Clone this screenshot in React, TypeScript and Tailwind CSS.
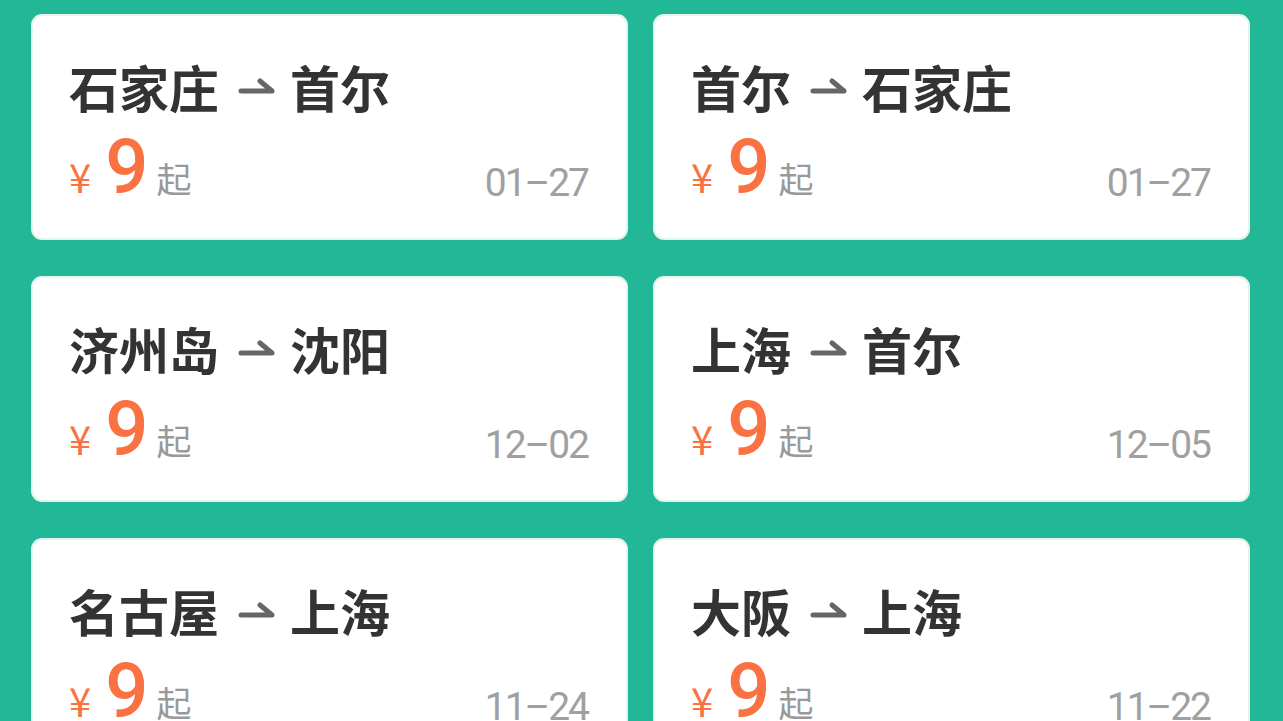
import React from 'react';

interface Route {
  from: string;
  to: string;
  price: number;
  date: string;
}

const routes: Route[] = [
  { from: '石家庄', to: '首尔', price: 9, date: '01-27' },
  { from: '首尔', to: '石家庄', price: 9, date: '01-27' },
  { from: '济州岛', to: '沈阳', price: 9, date: '12-02' },
  { from: '上海', to: '首尔', price: 9, date: '12-05' },
  { from: '名古屋', to: '上海', price: 9, date: '11-24' },
  { from: '大阪', to: '上海', price: 9, date: '11-22' },
];

function RouteArrow() {
  return (
    <svg width="38" height="18" viewBox="0 0 38 18" className="ml-[19px] mr-[14px] shrink-0">
      <path
        d="M3 14 H34 L22 4"
        fill="none"
        stroke="#666666"
        strokeWidth="5"
        strokeLinecap="round"
        strokeLinejoin="round"
      />
    </svg>
  );
}

function RouteCard({ route }: { route: Route }) {
  return (
    <div className="h-[226px] rounded-[11px] border-2 border-[#e3f4ef] bg-white pl-[36px] pr-[36px] pt-[45px]">
      <div
        className="flex items-center text-[50px] font-bold leading-[50px] text-[#333333]"
        style={{ fontFamily: '"Noto Sans CJK SC", sans-serif' }}
      >
        <span>{route.from}</span>
        <RouteArrow />
        <span>{route.to}</span>
      </div>

      <div className="mt-[18px] flex items-baseline justify-between">
        <div className="flex items-baseline">
          <span
            className="text-[40px] leading-none text-[#fa7142]"
            style={{ fontFamily: '"Noto Sans CJK SC", sans-serif' }}
          >
            ¥
          </span>
          <span
            className="ml-[14px] text-[76px] font-medium leading-[76px] text-[#fa7142]"
            style={{ fontFamily: 'Roboto, sans-serif' }}
          >
            {route.price}
          </span>
          <span
            className="ml-[8px] text-[35px] leading-none text-[#999999]"
            style={{ fontFamily: '"Noto Sans CJK SC", sans-serif' }}
          >
            起
          </span>
        </div>
        <span
          className="mr-[2px] translate-y-[3px] text-[39px] leading-none tracking-[-2px] text-[#a0a0a0]"
          style={{ fontFamily: 'Roboto, sans-serif' }}
        >
          {route.date.replace('-', '–')}
        </span>
      </div>
    </div>
  );
}

export default function App() {
  return (
    <div className="h-[721px] w-[1283px] overflow-hidden bg-[#22b797] pl-[31px] pr-[33px] pt-[14px]">
      <div className="grid grid-cols-2 gap-x-[25px] gap-y-[36px]">
        {routes.map((r, i) => (
          <RouteCard key={i} route={r} />
        ))}
      </div>
    </div>
  );
}
